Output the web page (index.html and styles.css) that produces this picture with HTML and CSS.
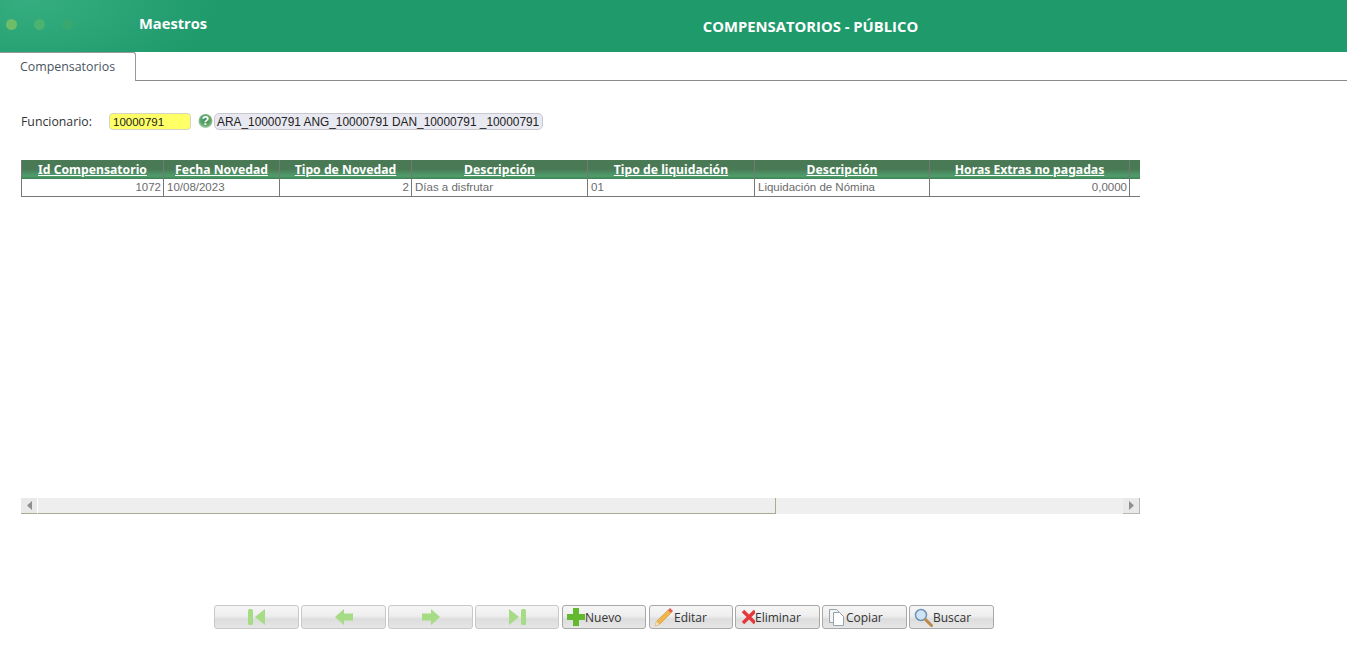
FILE: index.html
```html
<!DOCTYPE html>
<html lang="es">
<head>
<meta charset="utf-8">
<title>Compensatorios - Público</title>
<link rel="stylesheet" href="styles.css">
</head>
<body>
<header class="topbar">
  <div class="dots"><i class="dot d1"></i><i class="dot d2"></i><i class="dot d3"></i></div>
  <div class="module">Maestros</div>
  <h1 class="title">COMPENSATORIOS - PÚBLICO</h1>
</header>
<nav class="tabs"><div class="tab">Compensatorios</div></nav>
<main class="content">
  <div class="field">
    <label class="field-label">Funcionario:</label>
    <div class="input-key">10000791</div>
    <svg class="help" width="15" height="16" viewBox="0 0 16 16"><defs><radialGradient id="hg" cx=".5" cy=".45" r=".6"><stop offset="0" stop-color="#3f8f55"/><stop offset=".6" stop-color="#5fa56c"/><stop offset="1" stop-color="#c7e3c0"/></radialGradient></defs><circle cx="8" cy="8" r="7.500" fill="url(#hg)"/><text x="8" y="12.500" text-anchor="middle" class="help-q">?</text></svg>
    <div class="input-desc">ARA_10000791 ANG_10000791 DAN_10000791 _10000791</div>
  </div>
  <div class="grid-wrap">
    <table class="grid">
      <colgroup>
        <col class="c1"><col class="c2"><col class="c3"><col class="c4"><col class="c5"><col class="c6"><col class="c7"><col class="c8">
      </colgroup>
      <thead>
        <tr>
          <th><a href="#">Id Compensatorio</a></th>
          <th><a href="#">Fecha Novedad</a></th>
          <th><a href="#">Tipo de Novedad</a></th>
          <th><a href="#">Descripción</a></th>
          <th><a href="#">Tipo de liquidación</a></th>
          <th><a href="#">Descripción</a></th>
          <th><a href="#">Horas Extras no pagadas</a></th>
          <th></th>
        </tr>
      </thead>
      <tbody>
        <tr>
          <td class="num">1072</td>
          <td>10/08/2023</td>
          <td class="num">2</td>
          <td>Días a disfrutar</td>
          <td>01</td>
          <td>Liquidación de Nómina</td>
          <td class="num">0,0000</td>
          <td></td>
        </tr>
      </tbody>
    </table>
  </div>
  <div class="hscroll">
    <div class="sb-btn sb-left"><svg width="5" height="9" viewBox="0 0 5 9"><path d="M5 0v9L0 4.500z" fill="#8f8f8f"/></svg></div>
    <div class="sb-thumb"></div>
    <div class="sb-track"></div>
    <div class="sb-btn sb-right"><svg width="5" height="9" viewBox="0 0 5 9"><path d="M0 0v9l5-4.500z" fill="#8f8f8f"/></svg></div>
  </div>
  <div class="toolbar">
    <button class="btn nav" disabled><svg width="18" height="18" viewBox="0 0 18 18"><rect x="0" y="1" width="5" height="16" rx="1.500" fill="#a6dc85"/><path d="M7 9l10-8v16z" fill="#a6dc85"/></svg></button>
    <button class="btn nav" disabled><svg width="18" height="16" viewBox="0 0 18 16"><path d="M0 8l9-8v4.500h9v7H9V16z" fill="#a6dc85"/></svg></button>
    <button class="btn nav" disabled><svg width="18" height="16" viewBox="0 0 18 16"><path d="M18 8L9 0v4.500H0v7h9V16z" fill="#a6dc85"/></svg></button>
    <button class="btn nav short" disabled><svg width="18" height="18" viewBox="0 0 18 18"><rect x="13" y="1" width="5" height="16" rx="1.500" fill="#a6dc85"/><path d="M11 9L1 1v16z" fill="#a6dc85"/></svg></button>
    <button class="btn short"><svg width="18" height="18" viewBox="0 0 18 18"><path d="M6 0h6v6h6v6h-6v6H6v-6H0V6h6z" fill="#62b82f"/></svg><span>Nuevo</span></button>
    <button class="btn edit"><svg width="20" height="20" viewBox="0 0 20 20"><path d="M1 19l1.500-4.500L14 3l3 3L5.500 17.500z" fill="#f0b64a" stroke="#c98a2a" stroke-width=".5"/><path d="M14 3l2-2 3 3-2 2z" fill="#e2604e"/><path d="M1 19l1.500-4.500 3 3z" fill="#f3dfbb"/></svg><span>Editar</span></button>
    <button class="btn"><svg width="15" height="16" viewBox="0 0 15 16"><path d="M3 2l12 12M15 2L3 14" stroke="#e5383a" stroke-width="3.500"/></svg><span>Eliminar</span></button>
    <button class="btn"><svg width="19" height="18" viewBox="0 0 19 18"><path d="M2.500 1.500h7l3 3v10h-10z" fill="#f4f4f4" stroke="#98a2aa"/><path d="M6.500 4.500h6l4 4v9h-10z" fill="#fff" stroke="#98a2aa"/></svg><span>Copiar</span></button>
    <button class="btn"><svg width="19" height="20" viewBox="0 0 19 20"><circle cx="7" cy="8" r="5.500" fill="#cfe4f5" stroke="#6d93b5" stroke-width="1.500"/><path d="M11.500 12.500l6 6" stroke="#b98b4a" stroke-width="3" stroke-linecap="round"/></svg><span>Buscar</span></button>
  </div>
</main>
</body>
</html>
```
FILE: styles.css
```css
* { box-sizing: border-box; }
html, body { margin: 0; padding: 0; }
body { width: 1347px; height: 656px; overflow: hidden; background: #fff; font-family: "Open Sans", "Noto Sans", sans-serif; color: #333; }

.topbar { height: 52px; background: radial-gradient(ellipse 190px 90px at 30px 0, #35ad80 0%, #1f9a6b 100%); display: flex; align-items: center; position: relative; color: #fff; }
.dots { display: flex; gap: 17px; padding-left: 6px; width: 139px; margin-top: -4px; }
.dot { display: block; width: 11px; height: 11px; border-radius: 50%; }
.d1 { background: #6dbd6a; }
.d2 { background: #4cb26f; }
.d3 { background: #38a870; }
.module { font-size: 14.700px; font-weight: 700; margin-top: -6px; }
.title { position: absolute; left: 0; right: 0; margin: 0; padding-left: 274px; text-align: center; font-size: 14.800px; font-weight: 700; line-height: 54px; }

.tabs { height: 29px; border-bottom: 1px solid #8a8a8a; }
.tab { width: 136px; height: 29px; background: #fff; border: 1px solid #999; border-width: 1px 1px 0 0; border-radius: 0 3px 0 0; font-size: 12.400px; color: #4a5560; text-align: center; line-height: 28px; }

.content { padding: 31px 0 0 21px; }
.field { display: flex; align-items: center; height: 18px; }
.field-label { width: 88px; font-size: 12.300px; line-height: 18px; padding-top: 2px; color: #333; }
.input-key { width: 82px; height: 17px; background: #ffff66; border: 1px solid #d4d4c0; border-radius: 4px; font: 11.500px/17px "Liberation Sans", sans-serif; color: #222; padding-left: 3px; }
.help { margin-left: 7px; flex: none; }
.help-q { font: 700 13px "Liberation Sans", sans-serif; fill: #fff; }
.input-desc { margin-left: 1px; width: 329px; height: 17px; background: #e9e9f1; border: 1px solid #c8c8d0; border-radius: 5px; font: 11.880px/17px "Liberation Sans", sans-serif; color: #222; padding-left: 2px; white-space: nowrap; }

.grid-wrap { margin-top: 30px; width: 1119px; height: 338px; overflow: hidden; }
.grid { border-collapse: collapse; table-layout: fixed; width: 1119px; }
.c1 { width: 142px; } .c2 { width: 116px; } .c3 { width: 132px; } .c4 { width: 176px; }
.c5 { width: 167px; } .c6 { width: 175px; } .c7 { width: 200px; } .c8 { width: 11px; }
.grid th { height: 19px; padding: 0; background: linear-gradient(#4a7a55 0%, #4a7a55 48%, #4f9e6c 85%, #3f7f52 100%); border-left: 1px solid #777; text-align: center; font: 700 12.200px/16px "Noto Sans", sans-serif; }
.grid th a { color: #fff; text-decoration: underline; }
.grid td { height: 17px; padding: 0 2px 0 3px; border: 1px solid #777; border-top: 0; font: 11.500px/15px "Liberation Sans", sans-serif; color: #6b6b6b; white-space: nowrap; overflow: hidden; }
.grid td:last-child { border-right: 0; }
.grid td.num { text-align: right; }

.hscroll { display: flex; width: 1119px; height: 16px; background: #efefef; }
.sb-btn { width: 17px; height: 16px; flex: none; background: #e9e9e9; display: flex; align-items: center; justify-content: center; }
.sb-left { border-bottom: 1px solid #a9aa8e; border-right: 1px solid #fff; }
.sb-right { border: 1px solid #b8b8b0; border-width: 0 1px 1px 0; }
.sb-thumb { width: 738px; background: #eee; border: 1px solid #a9aa8e; border-width: 0 1px 1px 0; }
.sb-track { flex: 1; }

.toolbar { display: flex; gap: 2px; margin: 91px 0 0 193px; }
.btn { width: 85px; height: 24px; flex: none; display: flex; align-items: center; padding: 0 0 0 4px; border: 1px solid #a8a8a8; border-radius: 3px; background: linear-gradient(#f6f6f6 0%, #eeeeee 45%, #dddddd 60%, #e6e6e6 100%); font-family: "Open Sans", sans-serif; font-size: 12px; color: #333; }
.btn.nav { justify-content: center; padding: 0; border-color: #c8c8c8; }
.btn.short { width: 84px; margin-right: 1px; }
.btn.edit { width: 84px; }
.btn svg { flex: none; }
```
